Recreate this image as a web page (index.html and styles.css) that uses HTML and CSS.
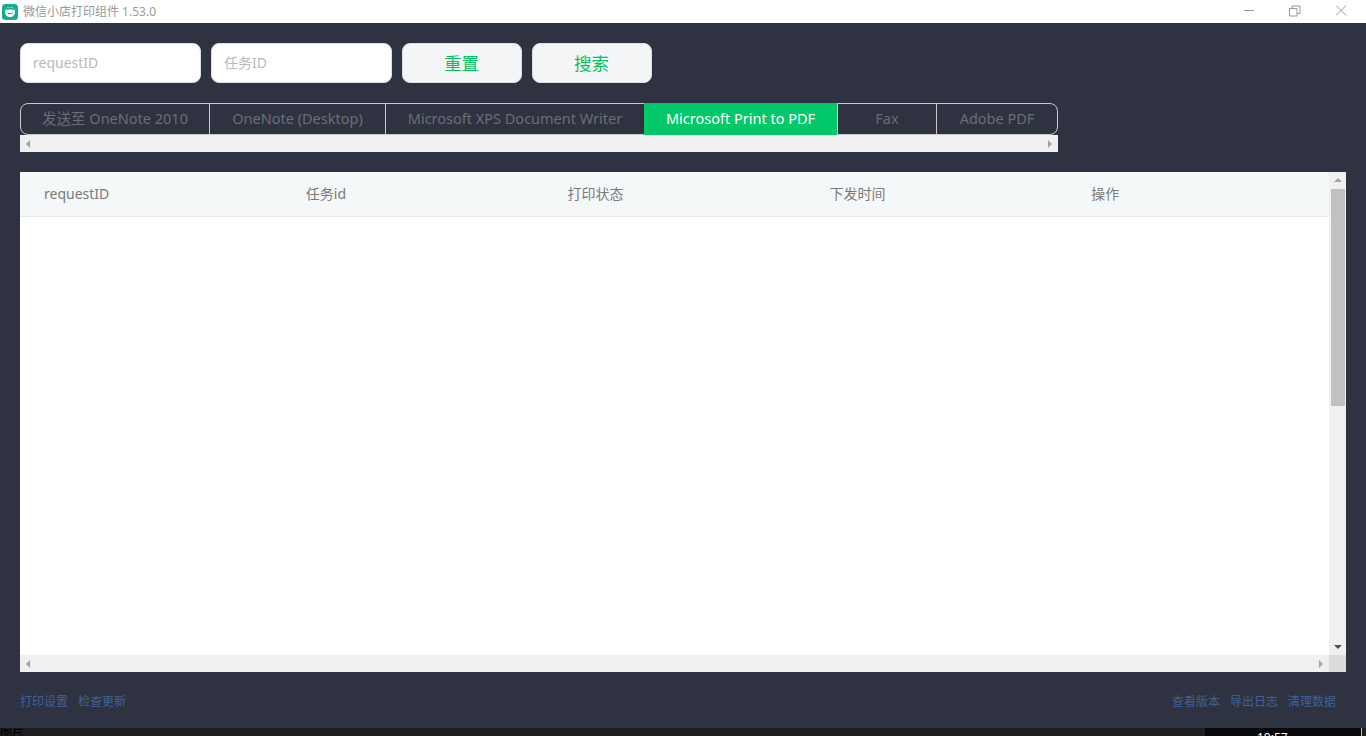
FILE: index.html
```html
<!DOCTYPE html>
<html>
<head>
<meta charset="utf-8">
<title>微信小店打印组件 1.53.0</title>
<link rel="stylesheet" href="styles.css">
</head>
<body>
<div class="titlebar">
    <svg class="app-icon" width="16" height="16" viewBox="0 0 16 16">
        <rect width="16" height="16" rx="3.5" fill="#12ad93"/>
        <path d="M3 7.5C3 4.5 5 3 8 3s5 1.500 5 4.500C13 11 11 13 8 13S3 11 3 7.500z" fill="#fff"/>
        <path d="M3.500 6.500C5 5 11 5 12.500 6.500L12 4.500 8 3 4 4.500z" fill="#12ad93"/>
        <path d="M5.500 8.500c1 1.600 4 1.600 5 0" fill="none" stroke="#12ad93" stroke-width="1.200"/>
    </svg>
    <span class="app-title">微信小店打印组件 1.53.0</span>
    <div class="win-btns">
        <svg width="12" height="12" viewBox="0 0 12 12"><path d="M1 5.500H11" stroke="#999" fill="none"/></svg>
        <svg width="12" height="12" viewBox="0 0 12 12"><path d="M.5 3.500h7.500v7.500H.5zM3 3.500V1h8v7.500H8" stroke="#999" fill="none"/></svg>
        <svg width="12" height="12" viewBox="0 0 12 12"><path d="M1 .5L11 10.500M11 .5L1 10.500" stroke="#999" fill="none"/></svg>
    </div>
</div>

<div class="main">
    <div class="search-row">
        <input class="search-input" type="text" placeholder="requestID">
        <input class="search-input" type="text" placeholder="任务ID">
        <button class="btn">重置</button>
        <button class="btn">搜索</button>
    </div>

    <div class="tabs-wrap">
        <div class="tabs">
            <div class="tab tab-1">发送至 OneNote 2010</div>
            <div class="tab tab-2">OneNote (Desktop)</div>
            <div class="tab tab-3">Microsoft XPS Document Writer</div>
            <div class="tab tab-4 active">Microsoft Print to PDF</div>
            <div class="tab tab-5">Fax</div>
            <div class="tab tab-6">Adobe PDF</div>
        </div>
        <div class="hbar">
            <span class="arrow-left"></span>
            <span class="arrow-right"></span>
        </div>
    </div>

    <div class="table-box">
        <div class="table-inner">
            <div class="table-area">
                <div class="table-head">
                    <div class="th">requestID</div>
                    <div class="th">任务id</div>
                    <div class="th">打印状态</div>
                    <div class="th">下发时间</div>
                    <div class="th">操作</div>
                </div>
            </div>
            <div class="vbar">
                <span class="arrow-up"></span>
                <div class="vthumb"></div>
                <span class="arrow-down"></span>
            </div>
        </div>
        <div class="table-bottom">
            <div class="hbar hbar-table">
                <span class="arrow-left"></span>
                <span class="arrow-right"></span>
            </div>
            <div class="corner"></div>
        </div>
    </div>

    <div class="footer">
        <div class="links">
            <a>打印设置</a>
            <a>检查更新</a>
        </div>
        <div class="links">
            <a>查看版本</a>
            <a>导出日志</a>
            <a>清理数据</a>
        </div>
    </div>
</div>

<div class="taskbar">
    <span class="task-left">图片</span>
    <div class="task-right">
        <span class="clock">10:57</span>
    </div>
</div>
</body>
</html>
```

FILE: styles.css
```css
* {
    box-sizing: border-box;
}

html, body {
    margin: 0;
    padding: 0;
    height: 736px;
    overflow: hidden;
    background-color: #2f3241;
    font-family: "Noto Sans", "Noto Sans CJK SC", sans-serif;
}

.titlebar {
    height: 23px;
    background-color: #fff;
    display: flex;
    align-items: center;
    padding-left: 2px;
}

.app-icon {
    flex: none;
}

.app-title {
    margin-left: 5px;
    font-size: 12px;
    line-height: 23px;
    color: #999;
}

.win-btns {
    margin-left: auto;
    display: flex;
    gap: 34px;
    padding-right: 19px;
    padding-bottom: 2px;
}

.main {
    height: 705px;
    padding: 20px 20px 0;
}

.search-row {
    display: flex;
    gap: 10px;
}

.search-input {
    width: 181px;
    height: 40px;
    padding: 0 12px 2px;
    background-color: #fff;
    border: 1px solid #dcdfe6;
    border-radius: 8px;
    font-size: 14px;
    font-family: inherit;
}

.search-input::placeholder {
    color: #b9b9b9;
}

.btn {
    width: 120px;
    height: 40px;
    padding: 0 1px 2px 0;
    background-color: #f4f5f7;
    border: 1px solid #dcdfe6;
    border-radius: 8px;
    color: #07c160;
    font-size: 17.500px;
    font-family: inherit;
}

.tabs-wrap {
    width: 1038px;
    margin-top: 20px;
}

.tabs {
    display: flex;
    height: 32px;
    border: 1px solid #c8c8c8;
    border-radius: 8px 8px 8px 8px;
}

.tab {
    display: flex;
    align-items: center;
    justify-content: center;
    padding-bottom: 2px;
    border-right: 1px solid #c8c8c8;
    color: #6b6e74;
    font-size: 14.500px;
    line-height: 28px;
}

.tab:last-child {
    border-right: none;
}

.tab-1 { width: 189px; }
.tab-2 { width: 176px; }
.tab-3 { width: 258px; border-right: none; }
.tab-4 { width: 194px; }
.tab-5 { width: 99px; }
.tab-6 { flex: 1; }

.tab.active {
    background-color: #03c86a;
    color: #fff;
    margin-top: -1px;
    margin-bottom: -1px;
}

.hbar {
    height: 17px;
    background-color: #f0f0f0;
    display: flex;
    align-items: center;
    justify-content: space-between;
    padding: 0 6px;
}

.arrow-left, .arrow-right {
    width: 0;
    height: 0;
    border-top: 4px solid transparent;
    border-bottom: 4px solid transparent;
}

.arrow-left {
    border-right: 4px solid #a3a3a3;
}

.arrow-right {
    border-left: 4px solid #a3a3a3;
}

.table-box {
    margin-top: 20px;
    height: 500px;
    background-color: #fff;
    display: flex;
    flex-direction: column;
}

.table-inner {
    flex: 1;
    display: flex;
    min-height: 0;
}

.table-area {
    flex: 1;
}

.table-head {
    height: 45px;
    display: grid;
    grid-template-columns: repeat(5, 1fr);
    align-items: center;
    background-color: #f5f8f9;
    border-bottom: 1px solid #e8e8e8;
}

.th {
    padding-left: 24px;
    font-size: 14px;
    line-height: 20px;
    color: #7a7a7a;
}

.vbar {
    width: 17px;
    background-color: #f0f0f0;
    display: flex;
    flex-direction: column;
    align-items: center;
}

.arrow-up, .arrow-down {
    width: 0;
    height: 0;
    border-left: 4px solid transparent;
    border-right: 4px solid transparent;
}

.arrow-up {
    margin-top: 6px;
    border-bottom: 4px solid #a3a3a3;
}

.arrow-down {
    margin-top: auto;
    margin-bottom: 6px;
    border-top: 4px solid #505050;
}

.vthumb {
    width: 14px;
    height: 217px;
    margin-top: 7px;
    background-color: #c1c1c1;
}

.table-bottom {
    display: flex;
    height: 17px;
}

.hbar-table {
    flex: 1;
}

.corner {
    width: 17px;
    background-color: #dcdcdc;
}

.footer {
    display: flex;
    justify-content: space-between;
    padding: 21px 10px 0 0;
}

.links {
    display: flex;
    gap: 10px;
}

.links a {
    font-size: 12px;
    line-height: 18px;
    color: #3f6296;
}

.taskbar {
    position: absolute;
    left: 0;
    right: 0;
    top: 728px;
    height: 8px;
    background-color: #1e1e1e;
    overflow: hidden;
    display: flex;
}

.task-left {
    font-size: 12px;
    line-height: 8px;
    margin-top: 1px;
    color: #000;
}

.task-right {
    margin-left: auto;
    width: 157px;
    height: 8px;
    background-color: #08080a;
    border-right: 1px solid #bbb;
    margin-right: 4px;
    padding-left: 52px;
}

.clock {
    display: block;
    font-size: 12px;
    line-height: 12px;
    margin-top: 4px;
    color: #fff;
}
```
